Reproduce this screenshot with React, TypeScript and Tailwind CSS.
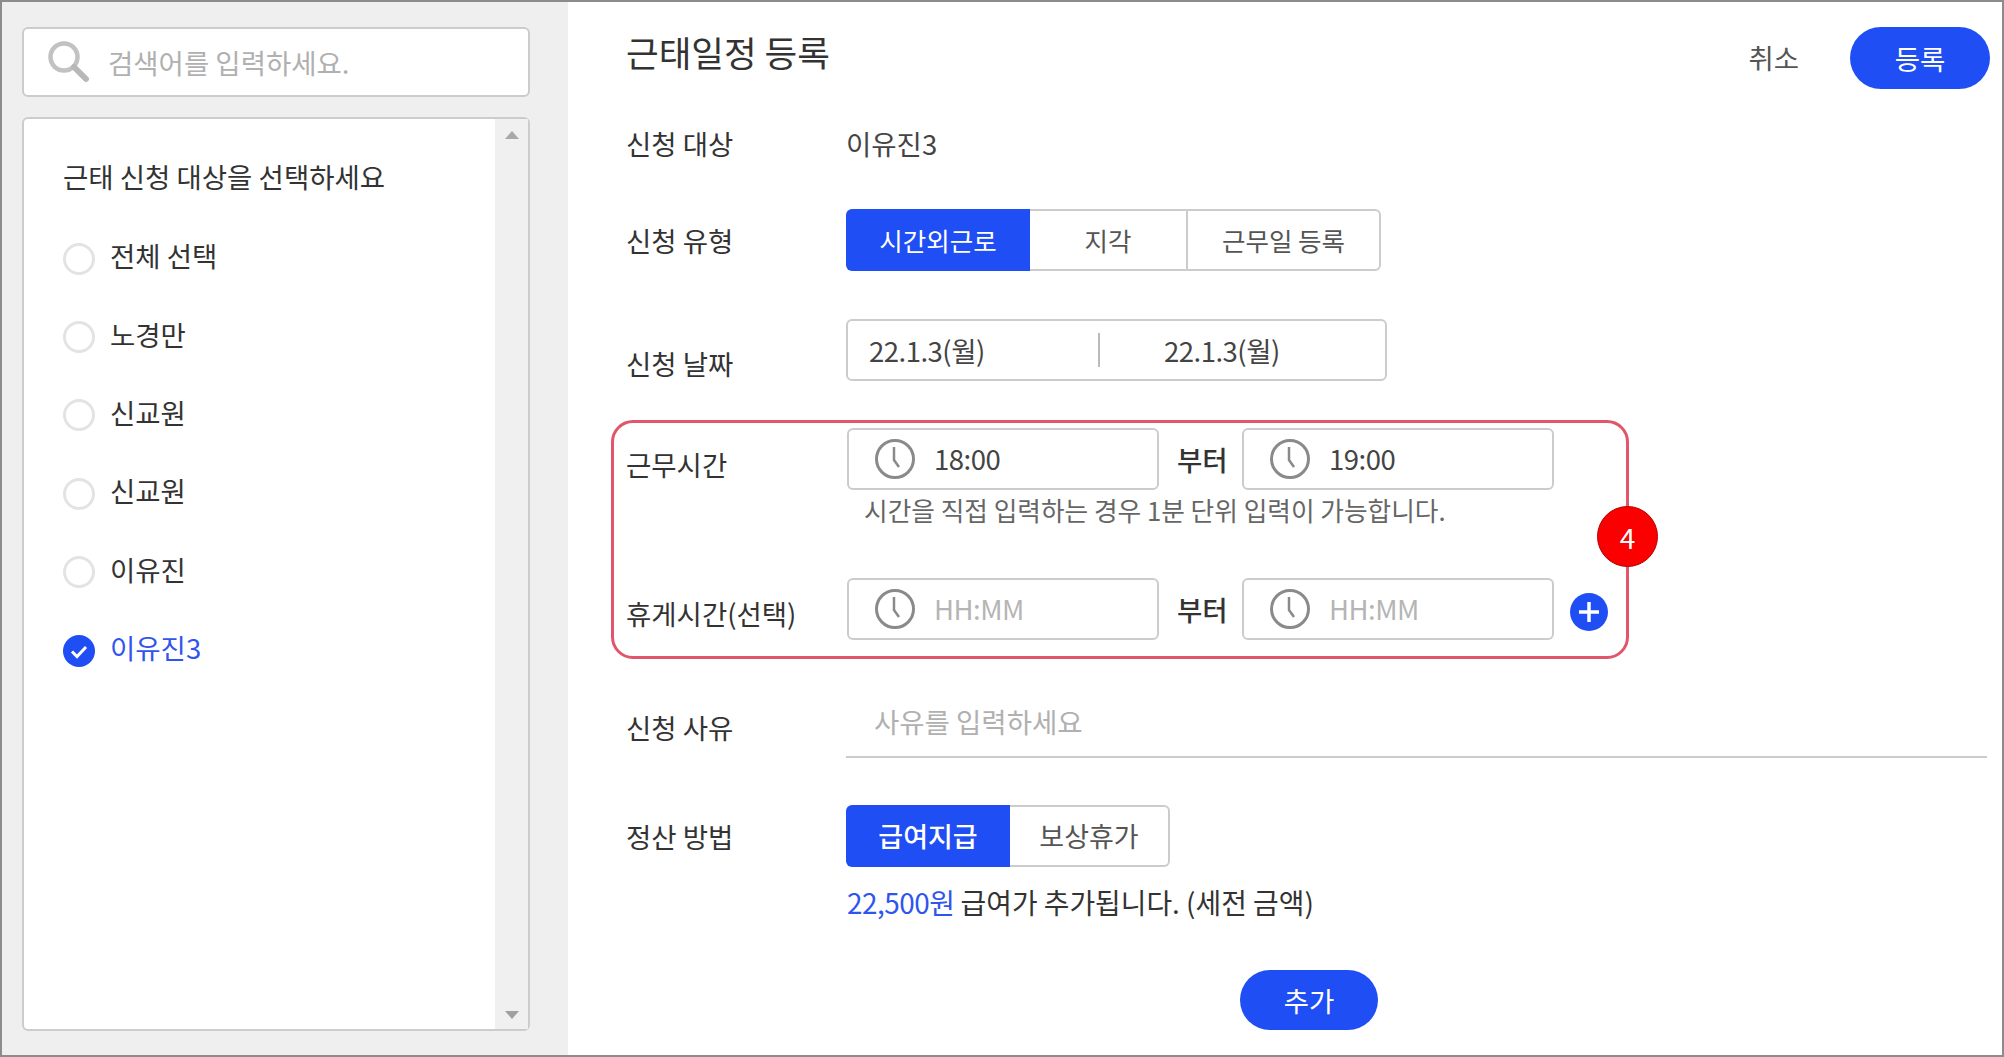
const Clock = () => (
  <svg width="42" height="42" viewBox="0 0 42 42" fill="none" stroke="#8a8a8a" strokeWidth="3" className="shrink-0">
    <circle cx="21" cy="21" r="18.5" />
    <path d="M20 9v13l5 7" strokeWidth="2.5" />
  </svg>
);

const TimeInput = ({ value, placeholder }: { value: string; placeholder?: boolean }) => (
  <div className="flex h-[62px] w-[312px] items-center rounded-[6px] border-2 border-[#cccccc] bg-white pl-[25px]">
    <Clock />
    <span className={`ml-[18px] -mt-[2px] tracking-[-0.5px] ${placeholder ? "text-[#b5b5b5]" : "text-[#444444]"}`}>{value}</span>
  </div>
);

const Row = ({ label, labelClass, className, children }: { label: string; labelClass?: string; className?: string; children: React.ReactNode }) => (
  <div className={`flex ${className ?? ""}`}>
    <div className={`w-[220px] shrink-0 text-[#333333] ${labelClass ?? ""}`}>{label}</div>
    <div className="min-w-0 flex-1">{children}</div>
  </div>
);

const Person = ({ name, checked }: { name: string; checked?: boolean }) => (
  <div className="flex h-[78.4px] items-center">
    {checked ? (
      <svg width="32" height="32" viewBox="0 0 32 32" className="mt-[2px] shrink-0">
        <circle cx="16" cy="16" r="16" fill="#1f4ef5" />
        <path d="M9 16.5l5 5 9-9.5" fill="none" stroke="#ffffff" strokeWidth="3" />
      </svg>
    ) : (
      <div className="mt-[2px] h-[32px] w-[32px] shrink-0 rounded-full border-[3px] border-[#e3e3e3] bg-white" />
    )}
    <span className={`ml-[15px] -mt-[5px] ${checked ? "text-[#2f55ee]" : "text-[#333333]"}`}>{name}</span>
  </div>
);

export default function App() {
  return (
    <div className="flex h-[1057px] w-[2004px] overflow-hidden border-2 border-[#8c8c8c] bg-white font-['Noto_Sans_CJK_KR','Noto_Sans',sans-serif] text-[27.5px] leading-[40px]">
      <aside className="flex h-full w-[566px] shrink-0 flex-col bg-[#efefef] pl-[20px] pr-[38px] pt-[25px]">
        <div className="flex h-[70px] w-[508px] shrink-0 items-center rounded-[6px] border-2 border-[#cccccc] bg-white pl-[24px]">
          <svg width="42" height="42" viewBox="0 0 42 42" fill="none" className="shrink-0">
            <circle cx="16" cy="16" r="13.5" stroke="#c2c2c2" strokeWidth="4.5" />
            <path d="M26 26l12 12" stroke="#b8b8b8" strokeWidth="6" strokeLinecap="round" />
          </svg>
          <span className="ml-[18px] text-[#b0b0b0]">검색어를 입력하세요.</span>
        </div>
        <div className="mt-[20px] flex h-[914px] w-[508px] shrink-0 rounded-[6px] border-2 border-[#cccccc] bg-white">
          <div className="flex-1 pl-[39px] pt-[37px]">
            <div className="text-[#333333]">근태 신청 대상을 선택하세요</div>
            <div className="mt-[22.5px]">
              <Person name="전체 선택" />
              <Person name="노경만" />
              <Person name="신교원" />
              <Person name="신교원" />
              <Person name="이유진" />
              <Person name="이유진3" checked />
            </div>
          </div>
          <div className="flex w-[33px] shrink-0 flex-col items-center justify-between bg-[#f0f0f0] pb-[10px] pt-[12px]">
            <svg width="14" height="8" viewBox="0 0 14 8"><path d="M7 0l7 8H0z" fill="#a8a8a8" /></svg>
            <svg width="14" height="8" viewBox="0 0 14 8"><path d="M0 0h14L7 8z" fill="#a0a0a0" /></svg>
          </div>
        </div>
      </aside>

      <main className="flex-1 pl-[58px] pr-[12px] pt-[25px]">
        <header className="flex h-[62px] items-start">
          <h1 className="mt-[2px] text-[35.5px] font-normal leading-[46px] text-[#333333]">근태일정 등록</h1>
          <span className="ml-auto mt-[10px] text-[#555555]">취소</span>
          <button className="ml-[51px] h-[62px] w-[140px] rounded-full bg-[#1f4ef5] text-white">등록</button>
        </header>

        <Row label="신청 대상" className="mt-[34px] h-[40px] items-center">
          <span className="text-[#444444]">이유진3</span>
        </Row>

        <Row label="신청 유형" labelClass="mt-[11px]" className="mt-[46px]">
          <div className="flex h-[62px] w-[535px] text-[25.5px] text-[#555555]">
            <div className="flex w-[184px] items-center justify-center rounded-l-[6px] bg-[#1f4ef5] text-white">시간외근로</div>
            <div className="flex w-[158px] items-center justify-center border-y-2 border-r-2 border-[#cccccc]">지각</div>
            <div className="flex flex-1 items-center justify-center rounded-r-[6px] border-y-2 border-r-2 border-[#cccccc]">근무일 등록</div>
          </div>
        </Row>

        <Row label="신청 날짜" labelClass="mt-[24px]" className="mt-[48px]">
          <div className="flex h-[62px] w-[541px] items-center rounded-[6px] border-2 border-[#cccccc] pl-[21px] tracking-[-0.5px] text-[#444444]">
            <span className="w-[229px]">22.1.3(월)</span>
            <div className="h-[34px] w-[2px] bg-[#bbbbbb]" />
            <span className="ml-[64px]">22.1.3(월)</span>
          </div>
        </Row>

        <section className="relative -ml-[15px] mt-[37px] h-[239px] w-[1018px] rounded-[22px] border-[3px] border-[#e0566b] pl-[12px] pr-[8px] pt-[5px]">
          <Row label="근무시간" labelClass="mt-[16px]">
            <div className="ml-[1px] flex items-center">
              <TimeInput value="18:00" />
              <span className="ml-[18px] w-[65px] font-medium text-[#333333]">부터</span>
              <TimeInput value="19:00" />
            </div>
            <div className="ml-[18px] text-[25.7px] leading-[40px] text-[#666666]">시간을 직접 입력하는 경우 1분 단위 입력이 가능합니다.</div>
          </Row>
          <Row label="휴게시간(선택)" labelClass="mt-[15px]" className="mt-[48px]">
            <div className="ml-[1px] flex items-center">
              <TimeInput value="HH:MM" placeholder />
              <span className="ml-[18px] w-[65px] font-medium text-[#333333]">부터</span>
              <TimeInput value="HH:MM" placeholder />
              <svg width="38" height="38" viewBox="0 0 38 38" className="ml-[16px] mt-[6px] shrink-0">
                <circle cx="19" cy="19" r="19" fill="#1f4ef5" />
                <path d="M19 9v20M9 19h20" stroke="#ffffff" strokeWidth="3.5" />
              </svg>
            </div>
          </Row>
          <div className="absolute -right-[32px] top-[83px] flex h-[61px] w-[61px] items-center justify-center rounded-full border border-[#b80000] bg-[#fa0000] text-[28px] text-white">4</div>
        </section>

        <Row label="신청 사유" labelClass="mt-[14px]" className="mt-[34px]">
          <div className="mr-[3px] h-[65px] border-b-2 border-[#cccccc] pl-[28px] pt-[8px] text-[#b0b0b0]">사유를 입력하세요</div>
        </Row>

        <Row label="정산 방법" labelClass="mt-[11px]" className="mt-[47px]">
          <div className="flex h-[62px] w-[324px] text-[#555555]">
            <div className="flex w-[164px] items-center justify-center rounded-l-[6px] bg-[#1f4ef5] text-[27px] font-medium text-white">급여지급</div>
            <div className="flex flex-1 items-center justify-center rounded-r-[6px] border-y-2 border-r-2 border-[#cccccc] text-[27px]">보상휴가</div>
          </div>
          <div className="ml-[1px] mt-[15px] text-[27.9px] text-[#333333]">
            <span className="text-[#2f55ee] tracking-[-0.5px]">22,500원</span> 급여가 추가됩니다. (세전 금액)
          </div>
        </Row>

        <div className="ml-[614px] mt-[48px]">
          <button className="h-[60px] w-[138px] rounded-full bg-[#1f4ef5] text-white">추가</button>
        </div>
      </main>
    </div>
  );
}
